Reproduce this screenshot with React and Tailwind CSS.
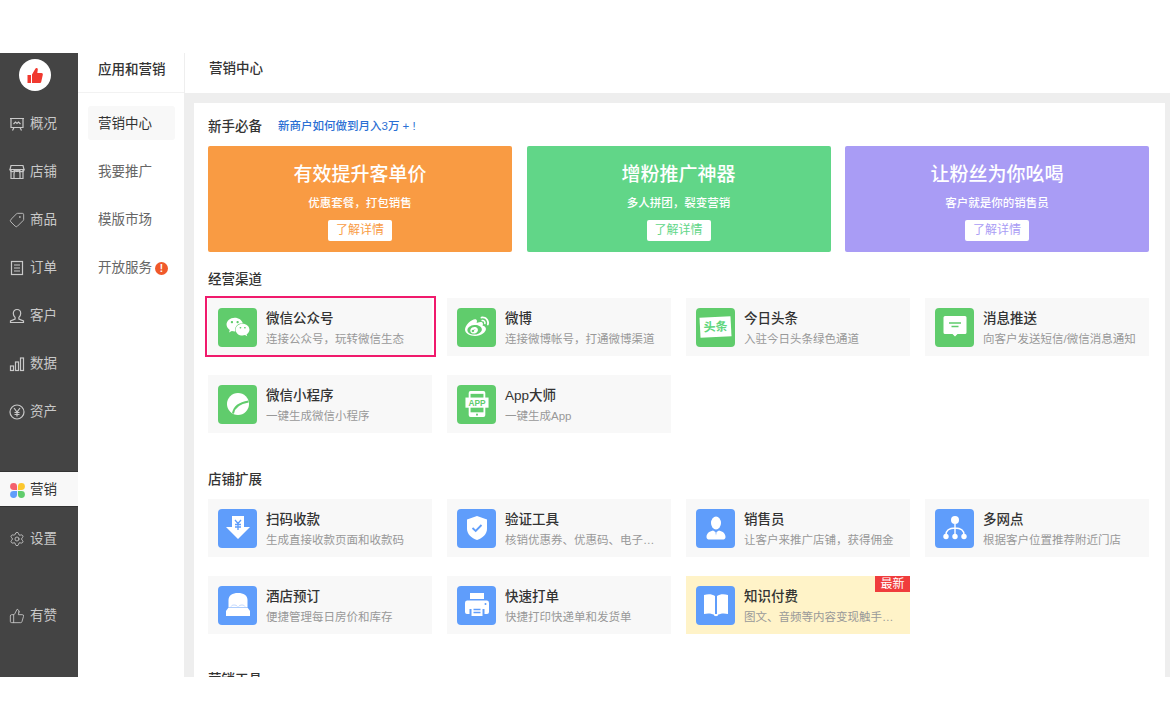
import React from "react";
import { Settings, Tag, ThumbsUp } from "lucide-react";
import { FaWeibo, FaWeixin } from "react-icons/fa";

const font = "font-['Liberation_Sans','Noto_Sans_CJK_SC',sans-serif]";

function OverviewIcon() {
  return (
    <svg viewBox="0 0 16 16" className="w-[16px] h-[16px]" fill="none" stroke="currentColor" strokeWidth="1.2">
      <path d="M1 2.5h14M2 2.5v9h12v-9M5 11.5l-1.5 3M11 11.5l1.5 3" />
      <path d="M4.5 8l2-2 1.5 1.5L9.5 6l2 2" />
    </svg>
  );
}

function StoreIcon() {
  return (
    <svg viewBox="0 0 16 16" className="w-[16px] h-[16px]" fill="none" stroke="currentColor" strokeWidth="1.2">
      <path d="M2 1.5h12l1 4H1zM2 5.5v9h12v-9" />
      <path d="M5 14.5V9.5a3 3 0 0 1 6 0v5M1 5.5a2.3 2 0 0 0 4.7 0 2.3 2 0 0 0 4.6 0 2.3 2 0 0 0 4.7 0" />
    </svg>
  );
}

function OrderIcon() {
  return (
    <svg viewBox="0 0 16 16" className="w-[16px] h-[16px]" fill="none" stroke="currentColor" strokeWidth="1.2">
      <rect x="2.5" y="1.5" width="11" height="13" />
      <path d="M5 5h6M5 8h6M5 11h6" />
    </svg>
  );
}

function UserIcon() {
  return (
    <svg viewBox="0 0 16 16" className="w-[16px] h-[16px]" fill="none" stroke="currentColor" strokeWidth="1.2">
      <path d="M8 1.5c2.3 0 3.7 1.7 3.7 3.9 0 1.7-.8 3-1.8 4V11l4.6 2v1.5h-13V13l4.6-2V9.4c-1-1-1.8-2.3-1.8-4 0-2.2 1.4-3.9 3.7-3.9z" />
    </svg>
  );
}

function DataIcon() {
  return (
    <svg viewBox="0 0 16 16" className="w-[16px] h-[16px]" fill="none" stroke="currentColor" strokeWidth="1.2">
      <rect x="1.5" y="10" width="3" height="4.5" />
      <rect x="6.5" y="6" width="3" height="8.5" />
      <rect x="11.5" y="2" width="3" height="12.5" />
    </svg>
  );
}

function AssetIcon() {
  return (
    <svg viewBox="0 0 16 16" className="w-[16px] h-[16px]" fill="none" stroke="currentColor" strokeWidth="1.2">
      <circle cx="8" cy="8" r="7" />
      <path d="M5 4l3 4 3-4M8 8v4.5M5.5 8.5h5M5.5 10.5h5" />
    </svg>
  );
}

function PetalIcon() {
  return (
    <svg viewBox="0 0 16 16" className="w-[15px] h-[15px]">
      <path d="M7.5 7.5H3.8a3.7 3.7 0 1 1 3.7-3.7z" fill="#f4606c" />
      <path d="M8.5 7.5V3.8a3.7 3.7 0 1 1 3.7 3.7z" fill="#fcc72d" />
      <path d="M7.5 8.5v3.7a3.7 3.7 0 1 1-3.7-3.7z" fill="#5f9dfb" />
      <path d="M8.5 8.5h3.7a3.7 3.7 0 1 1-3.7 3.7z" fill="#60cc6c" />
    </svg>
  );
}

function Glyph({ children, size = 26 }) {
  return (
    <svg viewBox="0 0 26 26" width={size} height={size} fill="#fff">
      {children}
    </svg>
  );
}

const icons = {
  wechat: <FaWeixin className="text-white w-[24px] h-[24px]" />,
  weibo: <FaWeibo className="text-white w-[24px] h-[24px]" />,
  mini: (
    <Glyph>
      <circle cx="13" cy="13" r="11" />
      <path d="M8 22.5c1-6 6-10.5 15.5-12" fill="none" stroke="#60cc6c" strokeWidth="2" />
    </Glyph>
  ),
  app: (
    <svg viewBox="0 0 26 30" width="24" height="28">
      <rect x="4" y="1" width="18" height="28" rx="2" fill="#fff" />
      <rect x="6" y="4" width="14" height="20" fill="#60cc6c" />
      <rect x="0.5" y="8" width="25" height="11" fill="#fff" />
      <text x="13" y="17" textAnchor="middle" fontSize="9" fontWeight="700" fill="#60cc6c" fontFamily="Liberation Sans">APP</text>
      <rect x="12" y="25.5" width="2" height="2" fill="#60cc6c" />
    </svg>
  ),
  toutiao: (
    <div className="w-[31px] h-[20px] bg-white -rotate-3 flex items-center justify-center text-[12px] font-bold leading-none text-[#60d67c]">
      头条
    </div>
  ),
  message: (
    <Glyph>
      <path d="M3 2h20a1.5 1.5 0 0 1 1.5 1.5v15A1.5 1.5 0 0 1 23 20h-7.5L13 22.5 10.5 20H3a1.5 1.5 0 0 1-1.5-1.5v-15A1.5 1.5 0 0 1 3 2z" />
      <path d="M7 9h12M9.5 12.5h7" stroke="#60cc6c" strokeWidth="1.4" />
    </Glyph>
  ),
  qrpay: (
    <Glyph>
      <path d="M7 1h12v11h6L13 24 1 12h6z" />
      <path d="M10 5l3 3.5L16 5M13 8.5V15M10 9.5h6M10 12h6" fill="none" stroke="#5f9dfb" strokeWidth="1.3" />
    </Glyph>
  ),
  shield: (
    <Glyph>
      <path d="M13 1l10 3.5V14c0 5-4.5 9-10 11C7.5 23 3 19 3 14V4.5z" />
      <path d="M8.5 13l3.2 3 5.8-6" fill="none" stroke="#5f9dfb" strokeWidth="1.8" />
    </Glyph>
  ),
  person: (
    <Glyph>
      <ellipse cx="13" cy="8" rx="5" ry="6.5" />
      <path d="M10 15.5l2.5 1.5.5 3.5.5-3.5 2.5-1.5c4 1 6.5 3 6.5 6.5 0 1.5-1 2.5-2 2.5H5.5c-1 0-2-1-2-2.5 0-3.5 2.5-5.5 6.5-6.5z" />
    </Glyph>
  ),
  branch: (
    <Glyph>
      <circle cx="13" cy="5" r="4" />
      <circle cx="4" cy="21.5" r="2.7" />
      <circle cx="13" cy="21.5" r="2.7" />
      <circle cx="22" cy="21.5" r="2.7" />
      <path d="M13 9v10M4 20c0-5 4-7 9-7s9 2 9 7" fill="none" stroke="#fff" strokeWidth="1.4" />
    </Glyph>
  ),
  bed: (
    <Glyph>
      <path d="M3.5 15V8c0-4.500 4-7 9.500-7s9.500 2.500 9.500 7v7z" />
      <path d="M3.500 15.500h19L25 19v5H1v-5z" />
      <path d="M6 14.500c1-2 5-2 6.500 0M13.500 14.500c1.500-2 5.500-2 6.500 0" fill="none" stroke="#a9c9fd" strokeWidth="0.7" />
    </Glyph>
  ),
  printer: (
    <Glyph>
      <path d="M6 1h14v6H6z" />
      <path d="M3 8.5h20a2.5 2.5 0 0 1 2 2.5v9a2 2 0 0 1-2 2h-2.5v-5h-15v5H3a2 2 0 0 1-2-2v-9a2.5 2.5 0 0 1 2-2.5z" />
      <path d="M7.5 15h11v9h-11z" />
      <path d="M9.5 17.5h7M9.5 20.5h7" stroke="#5f9dfb" strokeWidth="1.3" />
      <circle cx="21.5" cy="12" r="1" fill="#5f9dfb" />
    </Glyph>
  ),
  book: (
    <Glyph>
      <path d="M1 3c4-1 8-1 11 1v19c-3-1.5-7-2-11-1z" />
      <path d="M25 3c-4-1-8-1-11 1v19c3-1.5 7-2 11-1z" />
      <path d="M11 22h4v1.5l-2 .8-2-.8z" />
    </Glyph>
  ),
};

const navTop = [
  { label: "概况", icon: <OverviewIcon /> },
  { label: "店铺", icon: <StoreIcon /> },
  { label: "商品", icon: <Tag className="w-[16px] h-[16px] -scale-x-100" strokeWidth={1.3} /> },
  { label: "订单", icon: <OrderIcon /> },
  { label: "客户", icon: <UserIcon /> },
  { label: "数据", icon: <DataIcon /> },
  { label: "资产", icon: <AssetIcon /> },
];

const subNav = ["营销中心", "我要推广", "模版市场", "开放服务"];

const banners = [
  { title: "有效提升客单价", sub: "优惠套餐，打包销售", bg: "bg-[#f99b43]", text: "text-[#f99b43]" },
  { title: "增粉推广神器", sub: "多人拼团，裂变营销", bg: "bg-[#61d688]", text: "text-[#61d688]" },
  { title: "让粉丝为你吆喝", sub: "客户就是你的销售员", bg: "bg-[#a99cf5]", text: "text-[#a99cf5]" },
];

const channels = [
  { title: "微信公众号", desc: "连接公众号，玩转微信生态", icon: "wechat", picked: true },
  { title: "微博", desc: "连接微博帐号，打通微博渠道", icon: "weibo" },
  { title: "今日头条", desc: "入驻今日头条绿色通道", icon: "toutiao" },
  { title: "消息推送", desc: "向客户发送短信/微信消息通知", icon: "message" },
  { title: "微信小程序", desc: "一键生成微信小程序", icon: "mini" },
  { title: "App大师", desc: "一键生成App", icon: "app" },
];

const extensions = [
  { title: "扫码收款", desc: "生成直接收款页面和收款码", icon: "qrpay" },
  { title: "验证工具", desc: "核销优惠券、优惠码、电子卡券等", icon: "shield" },
  { title: "销售员", desc: "让客户来推广店铺，获得佣金", icon: "person" },
  { title: "多网点", desc: "根据客户位置推荐附近门店", icon: "branch" },
  { title: "酒店预订", desc: "便捷管理每日房价和库存", icon: "bed" },
  { title: "快速打单", desc: "快捷打印快递单和发货单", icon: "printer" },
  { title: "知识付费", desc: "图文、音频等内容变现触手可及", icon: "book", isNew: true },
];

function NavItem({ item }) {
  return (
    <div className="h-[48px] flex items-center pl-[9px] pt-[2px] gap-[5px] text-[#c9c9c9]">
      <span className="w-[16px] flex justify-center">{item.icon}</span>
      <span className="text-[13.5px]">{item.label}</span>
    </div>
  );
}

function Card({ item, color }) {
  return (
    <div className={`relative h-[58px] flex items-center pl-[10px] gap-[9px] ${item.isNew ? "bg-[#fff3c8]" : "bg-[#f8f8f8]"}`}>
      <div className={`w-[39px] h-[39px] rounded-[4px] flex items-center justify-center shrink-0 ${color}`}>
        {icons[item.icon]}
      </div>
      <div className="min-w-0 w-[160px] pt-[3px]">
        <div className="text-[13.5px] leading-[18px] font-medium text-[#333]">{item.title}</div>
        <div className="text-[11.5px] leading-[18px] mt-[2px] text-[#999] truncate">{item.desc}</div>
      </div>
      {item.picked && (
        <div className="absolute left-[-3px] right-[-4px] top-[-2px] bottom-[-1px] border-[2px] border-[#f01a6c]"></div>
      )}
      {item.isNew && (
        <div className="absolute right-0 top-0 w-[35px] h-[16px] bg-[#f03c3c] text-white text-[12px] leading-[16px] text-center">
          最新
        </div>
      )}
    </div>
  );
}

function SectionTitle({ children, className }) {
  return <div className={`h-[18px] leading-[18px] text-[13.5px] font-medium text-[#333] ${className}`}>{children}</div>;
}

export default function App() {
  return (
    <div className={`h-[711px] pt-[53px] overflow-hidden bg-white ${font}`}>
      <div className="h-[624px] flex overflow-hidden">
        {/* main nav */}
        <aside className="w-[78px] shrink-0 bg-[#444] flex flex-col">
          <div className="h-[46px] pt-[6px] pl-[19px]">
            <div className="w-[32px] h-[32px] rounded-full bg-white flex items-center justify-center">
              <svg viewBox="0 0 16 17" className="w-[16px] h-[17px]" fill="#f0392f">
                <path d="M0.5 8h3.5v8H0.5zM5 7.500l3.500-6c.8-1.200 2.500-.5 2.300 1L10.300 6H14.500c1 0 1.500.8 1.300 1.700l-1.600 7.300c-.2.600-.6 1-1.200 1H5z" />
              </svg>
            </div>
          </div>
          {navTop.map((item) => (
            <NavItem key={item.label} item={item} />
          ))}
          <div className="mt-[36px] h-[36px] pt-[3px] flex items-center pl-[9px] gap-[5px] bg-[#f8f8f8] border-y border-[#333] text-[#333]">
            <span className="w-[16px] flex justify-center"><PetalIcon /></span>
            <span className="text-[13.5px]">营销</span>
          </div>
          <div className="mt-[7px]">
            <NavItem item={{ label: "设置", icon: <Settings className="w-[16px] h-[16px]" strokeWidth={1.3} /> }} />
          </div>
          <div className="mt-[29px]">
            <NavItem item={{ label: "有赞", icon: <ThumbsUp className="w-[16px] h-[16px]" strokeWidth={1.3} /> }} />
          </div>
        </aside>

        {/* sub nav */}
        <aside className="w-[107px] shrink-0 bg-white border-r border-[#eee] flex flex-col">
          <div className="h-[40px] border-b border-[#f2f2f2] pl-[20px] pb-[4px] flex items-center text-[13.5px] font-medium text-[#333]">
            应用和营销
          </div>
          <div className="pt-[13px] pl-[10px] pr-[9px] flex flex-col">
            {subNav.map((label, i) => (
              <div key={label} className={`h-[34px] mb-[14px] pl-[10px] pt-[2px] rounded-[3px] flex items-center gap-[3px] text-[13.5px] ${i === 0 ? "bg-[#f8f8f8] text-[#333]" : "text-[#666]"}`}>
                {label}
                {label === "开放服务" && (
                  <span className="w-[13px] h-[13px] rounded-full bg-[#f0592a] text-white text-[10px] leading-[13px] text-center font-bold">!</span>
                )}
              </div>
            ))}
          </div>
        </aside>

        {/* content */}
        <main className="flex-1 min-w-0 flex flex-col">
          <div className="h-[40px] shrink-0 pl-[24px] pb-[8px] flex items-center text-[13.5px] font-medium text-[#333]">
            营销中心
          </div>
          <div className="flex-1 min-h-0 bg-[#eeeeee] pl-[9px] pr-[5px] pt-[10px]">
            <div className="h-full bg-white pl-[14px] pr-[16px] pt-[15px] overflow-hidden">
              <div className="flex items-center gap-[16px]">
                <SectionTitle>新手必备</SectionTitle>
                <span className="text-[11.5px] font-medium text-[#2b6fd4]">新商户如何做到月入3万 + !</span>
              </div>
              <div className="mt-[10px] grid grid-cols-3 gap-x-[14.5px]">
                {banners.map((b) => (
                  <div key={b.title} className={`h-[106px] rounded-[2px] flex flex-col items-center text-white ${b.bg}`}>
                    <div className="mt-[15px] text-[19px] leading-[28px] font-medium">{b.title}</div>
                    <div className="mt-[5px] text-[11.5px] leading-[18px] font-medium">{b.sub}</div>
                    <div className={`mt-[8px] w-[64px] h-[21px] rounded-[2px] bg-white text-[12px] leading-[21px] text-center ${b.text}`}>了解详情</div>
                  </div>
                ))}
              </div>

              <SectionTitle className="mt-[19px]">经营渠道</SectionTitle>
              <div className="mt-[9px] grid grid-cols-4 gap-x-[15px] gap-y-[19px]">
                {channels.map((item) => (
                  <Card key={item.title} item={item} color="bg-[#60cc6c]" />
                ))}
              </div>

              <SectionTitle className="mt-[38px]">店铺扩展</SectionTitle>
              <div className="mt-[10px] grid grid-cols-4 gap-x-[15px] gap-y-[19px]">
                {extensions.map((item) => (
                  <Card key={item.title} item={item} color="bg-[#5f9dfb]" />
                ))}
              </div>

              <SectionTitle className="mt-[37px]">营销工具</SectionTitle>
            </div>
          </div>
        </main>
      </div>
    </div>
  );
}
